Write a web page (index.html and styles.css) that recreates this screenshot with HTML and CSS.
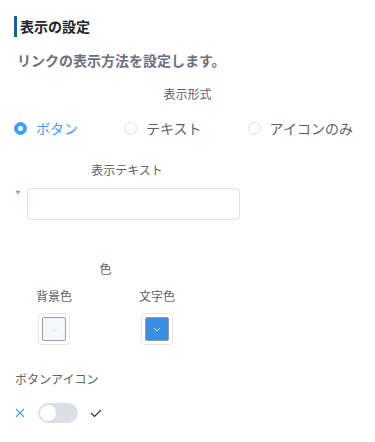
FILE: index.html
```html
<!DOCTYPE html>
<html lang="ja">
<head>
<meta charset="utf-8">
<link rel="stylesheet" href="styles.css">
</head>
<body>
<div class="page">
  <h2 class="heading">表示の設定</h2>
  <p class="subtitle">リンクの表示方法を設定します。</p>

  <div class="label center">表示形式</div>
  <div class="radios">
    <label class="radio checked"><span class="dot"></span><span>ボタン</span></label>
    <label class="radio"><span class="dot"></span><span>テキスト</span></label>
    <label class="radio"><span class="dot"></span><span>アイコンのみ</span></label>
  </div>

  <div class="text-field">
    <div class="label center">表示テキスト</div>
    <div class="input-row">
      <span class="req">*</span>
      <div class="input"></div>
    </div>
  </div>

  <div class="colors">
    <div class="label center">色</div>
    <div class="color-cols">
      <div class="color-col">
        <div class="label">背景色</div>
        <div class="picker"><span class="swatch light"><svg viewBox="0 0 10 6" width="8" height="5"><path d="M1 1l4 4 4-4" fill="none" stroke="#dcdfe6" stroke-width="1"/></svg></span></div>
      </div>
      <div class="color-col">
        <div class="label">文字色</div>
        <div class="picker"><span class="swatch blue"><svg viewBox="0 0 10 6" width="8" height="5"><path d="M1 1l4 4 4-4" fill="none" stroke="#ffffff" stroke-width="1"/></svg></span></div>
      </div>
    </div>
  </div>

  <div class="label icon-label">ボタンアイコン</div>
  <div class="switch-row">
    <svg class="x" viewBox="0 0 10 10" width="10" height="10"><path d="M1 1l8 8M9 1l-8 8" stroke="#409eff" stroke-width="1.1"/></svg>
    <span class="switch"><span class="knob"></span></span>
    <svg class="check" viewBox="0 0 12 10" width="12" height="10"><path d="M1 5l3.5 3.5L11 2" fill="none" stroke="#303133" stroke-width="1.2"/></svg>
  </div>
</div>
</body>
</html>
```

FILE: styles.css
```css
* { box-sizing: border-box; }
html, body { margin: 0; padding: 0; background: #fff; }
body {
  font-family: "Noto Sans CJK JP", "Noto Sans", sans-serif;
  color: #606266;
  width: 375px;
  height: 442px;
  overflow: hidden;
}
.page { padding: 0 0 0 14px; }
.heading {
  margin: 16px 0 0 0;
  height: 21px;
  line-height: 21px;
  font-size: 14px;
  font-weight: 700;
  color: #1f2328;
  border-left: 3px solid #0e6399;
  padding-left: 3px;
}
.subtitle {
  margin: 13px 0 0 3px;
  line-height: 20px;
  font-size: 14px;
  font-weight: 700;
  color: #6b7180;
}
.label {
  font-size: 12px;
  line-height: 18px;
  color: #606266;
}
.center { text-align: center; }
.page > .label.center { margin-top: 15px; margin-left: -14px; }
.radios {
  margin-top: 15px;
  height: 20px;
  display: flex;
  align-items: center;
  white-space: nowrap;
}
.radio {
  flex: none;
  display: flex;
  align-items: center;
  gap: 9px;
  font-size: 14px;
  line-height: 20px;
  color: #606266;
  margin-right: 46px;
  white-space: nowrap;
}
.radio.checked { color: #409eff; }
.dot {
  flex: none;
  width: 13px;
  height: 13px;
  border-radius: 50%;
  border: 1px solid #dcdfe6;
  background: #fff;
  position: relative;
}
.radio.checked .dot {
  border-color: #409eff;
  background: #409eff;
}
.radio.checked .dot::after {
  content: "";
  position: absolute;
  left: 50%;
  top: 50%;
  width: 5px;
  height: 5px;
  margin: -2.5px 0 0 -2.5px;
  border-radius: 50%;
  background: #fff;
}
.text-field { width: 226px; margin-top: 23px; }
.input-row {
  margin-top: 9px;
  display: flex;
  align-items: flex-start;
}
.req {
  color: #f56c6c;
  font-size: 13px;
  line-height: 14px;
  width: 13px;
  padding-left: 1px;
}
.input {
  flex: 1;
  height: 32px;
  border: 1px solid #dcdfe6;
  border-radius: 4px;
  background: #fff;
}
.colors { width: 183px; margin-top: 40px; }
.color-cols {
  margin-top: 9px;
  display: flex;
  gap: 23px;
}
.color-col {
  width: 80px;
  display: flex;
  flex-direction: column;
  align-items: center;
}
.picker {
  margin-top: 8px;
  width: 32px;
  height: 32px;
  border: 1px solid #e4e7ed;
  border-radius: 4px;
  padding: 3px;
  display: flex;
}
.swatch {
  flex: 1;
  border: 1px solid #999;
  border-radius: 2px;
  display: flex;
  align-items: center;
  justify-content: center;
}
.swatch.light { background: #f5f7fa; }
.swatch.blue { background: #3a8ee6; }
.icon-label { margin-top: 25px; margin-left: 1px; }
.switch-row {
  margin-top: 15px;
  display: flex;
  align-items: center;
  height: 20px;
}
.x { margin-left: 1px; }
.switch {
  margin-left: 13px;
  width: 40px;
  height: 20px;
  border-radius: 10px;
  background: #dcdfe6;
  position: relative;
}
.knob {
  position: absolute;
  left: 2px;
  top: 2px;
  width: 16px;
  height: 16px;
  border-radius: 50%;
  background: #fff;
}
.check { margin-left: 12px; }
```
